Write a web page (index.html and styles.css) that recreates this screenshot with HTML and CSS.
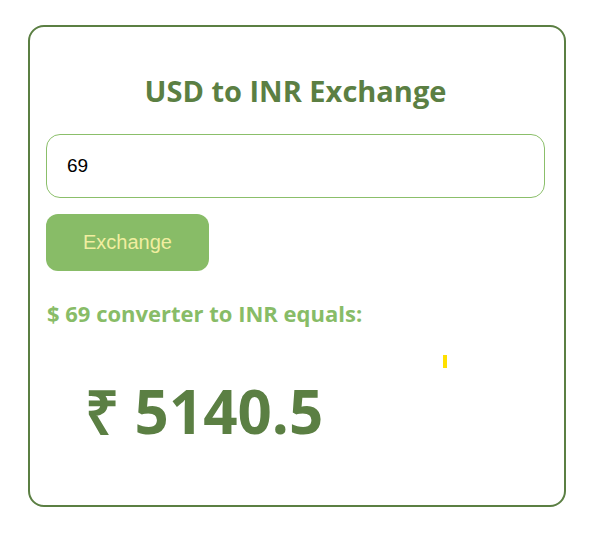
FILE: index.html
```html
<!DOCTYPE html>
<html>
<head>
<meta charset="utf-8">
<link rel="stylesheet" href="styles.css">
</head>
<body>
<div class="card">
  <h1 class="title">USD to INR Exchange</h1>
  <input class="amount" type="text" value="69">
  <button class="btn">Exchange</button>
  <p class="label">$ 69 converter to INR equals:</p>
  <div class="result">
    <span class="marker"></span>
    <span class="value">₹ 5140.5</span>
  </div>
</div>
</body>
</html>
```
FILE: styles.css
```css
html, body { margin: 0; padding: 0; background: #fff; }
body { padding: 25px 0 0 28px; }
.card {
  box-sizing: border-box;
  width: 538px;
  height: 482px;
  border: 2px solid #5b7f43;
  border-radius: 16px;
  padding: 0 19px 0 16px;
  display: flex;
  flex-direction: column;
  align-items: flex-start;
}
.title {
  align-self: stretch;
  text-align: center;
  margin: 44px 0 0 0;
  font-family: "Open Sans", sans-serif;
  font-weight: 700;
  font-size: 29px;
  line-height: 40px;
  color: #5b7f43;
}
.amount {
  box-sizing: border-box;
  align-self: stretch;
  margin: 23px 0 0 0;
  height: 64px;
  border: 1px solid #8bbf6a;
  border-radius: 14px;
  padding: 0 20px;
  font-family: "Liberation Sans", Arial, sans-serif;
  font-size: 19px;
  color: #000;
  outline: none;
}
.btn {
  margin-top: 16px;
  width: 163px;
  height: 57px;
  border: none;
  border-radius: 12px;
  background: #88bc67;
  color: #f1eea0;
  font-family: "Liberation Sans", Arial, sans-serif;
  font-size: 20px;
}
.label {
  margin: 27px 0 0 1px;
  font-family: "Open Sans", sans-serif;
  font-weight: 700;
  font-size: 22px;
  line-height: 30px;
  color: #88bc67;
}
.result {
  position: relative;
  align-self: stretch;
  padding: 48px 0 0 39px;
}
.marker {
  position: absolute;
  left: 397px;
  top: 27px;
  width: 4px;
  height: 13px;
  background: #ffe000;
}
.value {
  font-family: "Open Sans", sans-serif;
  font-weight: 700;
  font-size: 60px;
  line-height: 70px;
  color: #5b7f43;
}
```
